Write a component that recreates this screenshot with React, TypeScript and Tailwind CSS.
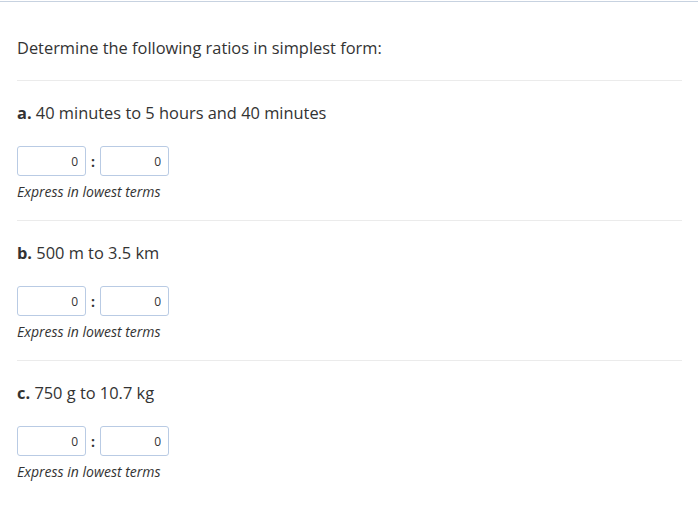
import React from "react";

const parts = [
  { label: "a.", text: "40 minutes to 5 hours and 40 minutes" },
  { label: "b.", text: "500 m to 3.5 km" },
  { label: "c.", text: "750 g to 10.7 kg" },
];

const RatioInput = () => (
  <div className="flex items-center">
    <input
      type="text"
      defaultValue="0"
      className="w-[69px] h-[30px] border border-[#b9cbe4] rounded-[3px] bg-white pr-[7px] text-right text-[12px] text-[#333] outline-none"
    />
    <span className="mx-[5px] font-bold text-[14px] text-[#333]">:</span>
    <input
      type="text"
      defaultValue="0"
      className="w-[69px] h-[30px] border border-[#b9cbe4] rounded-[3px] bg-white pr-[7px] text-right text-[12px] text-[#333] outline-none"
    />
  </div>
);

export default function App() {
  return (
    <div className="w-[698px] h-[506px] bg-white overflow-hidden" style={{ fontFamily: "'Open Sans', sans-serif" }}>
      <div className="mt-px border-t border-[#c7d2e0]" />
      <div className="pl-[17px] pr-[16px] text-[#333]">
        {/* question prompt */}
        <div className="pt-[34px] pb-[20px] border-b border-[#ebebeb] text-[16.4px] leading-[24px]">
          Determine the following ratios in simplest form:
        </div>

        {parts.map((p, i) => (
          <div
            key={p.label}
            className={
              i < parts.length - 1
                ? "pt-[20px] pb-[18px] border-b border-[#ebebeb]"
                : "pt-[20px] pb-[18px]"
            }
          >
            <div className="text-[16.4px] leading-[24px]">
              <span className="font-bold">{p.label}</span> {p.text}
            </div>
            <div className="mt-[21px]">
              <RatioInput />
            </div>
            <div className="mt-[6px] text-[14px] leading-[20px] italic">Express in lowest terms</div>
          </div>
        ))}
      </div>
    </div>
  );
}
